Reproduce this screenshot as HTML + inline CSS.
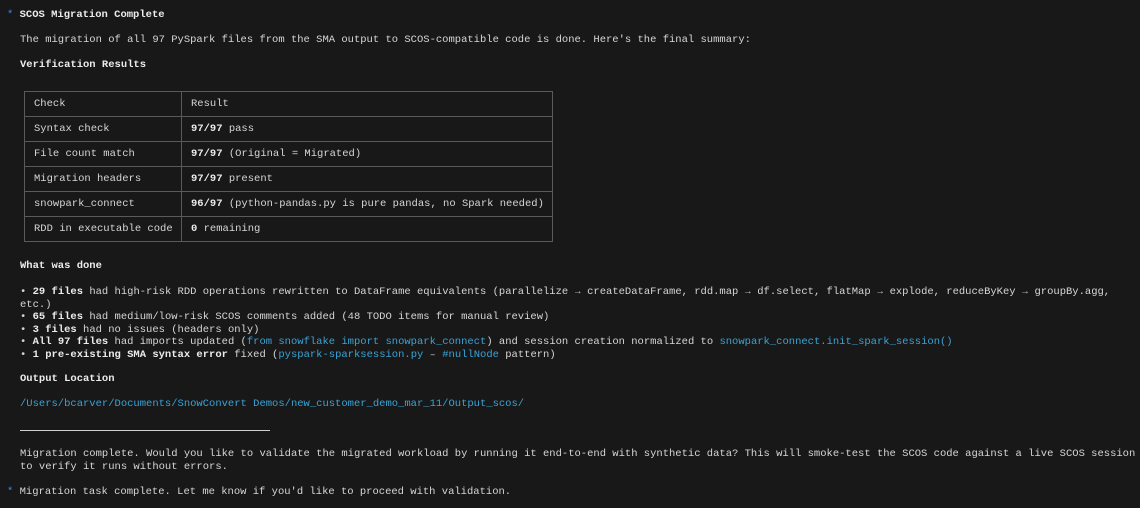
<!DOCTYPE html>
<html><head><meta charset="utf-8"><style>
html,body{margin:0;padding:0;background:#181818;width:1140px;height:508px;overflow:hidden}
body{font-family:"Liberation Mono",monospace;font-size:10.5px;color:#d6d6d6;position:relative}
.l{position:absolute;white-space:pre;line-height:12.5px}
b{color:#ececec}
.a{color:#3aa3d6}
.s{color:#3b8eea}
.r{display:inline-block;width:6.3px;overflow:hidden;text-align:center;vertical-align:top;font-size:9.5px;line-height:12.5px}
table{position:absolute;left:24px;top:91px;border-collapse:collapse}
td{border:1px solid #5a5a5a;height:24px;padding:0 0 0 9px;white-space:pre;line-height:13px}
td:first-child{width:147px}
td:last-child{width:361px}
</style></head><body>
<div class="l" style="left:7px;top:9px"><span class="s">*</span> <b>SCOS Migration Complete</b></div>
<div class="l" style="left:20px;top:34px">The migration of all 97 PySpark files from the SMA output to SCOS-compatible code is done. Here's the final summary:</div>
<div class="l" style="left:20px;top:59px"><b>Verification Results</b></div>
<table>
<tr><td>Check</td><td>Result</td></tr>
<tr><td>Syntax check</td><td><b>97/97</b> pass</td></tr>
<tr><td>File count match</td><td><b>97/97</b> (Original = Migrated)</td></tr>
<tr><td>Migration headers</td><td><b>97/97</b> present</td></tr>
<tr><td>snowpark_connect</td><td><b>96/97</b> (python-pandas.py is pure pandas, no Spark needed)</td></tr>
<tr><td>RDD in executable code</td><td><b>0</b> remaining</td></tr>
</table>
<div class="l" style="left:20px;top:260px"><b>What was done</b></div>
<div class="l" style="left:20px;top:286px">• <b>29 files</b> had high-risk RDD operations rewritten to DataFrame equivalents (parallelize <span class="r">→</span> createDataFrame, rdd.map <span class="r">→</span> df.select, flatMap <span class="r">→</span> explode, reduceByKey <span class="r">→</span> groupBy.agg,</div>
<div class="l" style="left:20px;top:298.5px">etc.)</div>
<div class="l" style="left:20px;top:311px">• <b>65 files</b> had medium/low-risk SCOS comments added (48 TODO items for manual review)</div>
<div class="l" style="left:20px;top:323.5px">• <b>3 files</b> had no issues (headers only)</div>
<div class="l" style="left:20px;top:336px">• <b>All 97 files</b> had imports updated (<span class="a">from snowflake import snowpark_connect</span>) and session creation normalized to <span class="a">snowpark_connect.init_spark_session()</span></div>
<div class="l" style="left:20px;top:348.5px">• <b>1 pre-existing SMA syntax error</b> fixed (<span class="a">pyspark-sparksession.py</span> <span class="r">–</span> <span class="a">#nullNode</span> pattern)</div>
<div class="l" style="left:20px;top:373px"><b>Output Location</b></div>
<div class="l a" style="left:20px;top:398px">/Users/bcarver/Documents/SnowConvert Demos/new_customer_demo_mar_11/Output_scos/</div>
<div style="position:absolute;left:20px;top:430px;width:250px;height:1px;background:#cfcfcf"></div>
<div class="l" style="left:20px;top:448px">Migration complete. Would you like to validate the migrated workload by running it end-to-end with synthetic data? This will smoke-test the SCOS code against a live SCOS session</div>
<div class="l" style="left:20px;top:460.5px">to verify it runs without errors.</div>
<div class="l" style="left:7px;top:486px"><span class="s">*</span> Migration task complete. Let me know if you'd like to proceed with validation.</div>
</body></html>
